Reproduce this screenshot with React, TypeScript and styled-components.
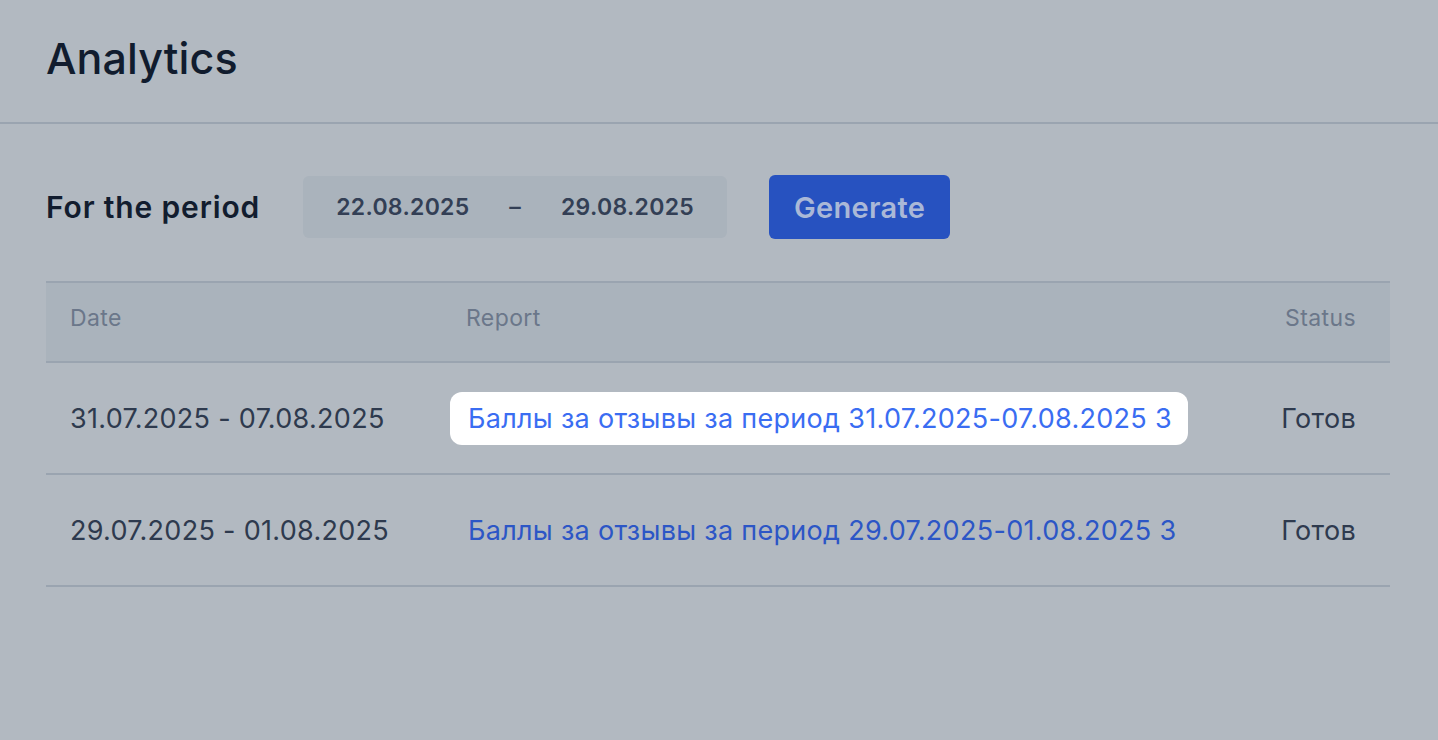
import React from 'react'
import styled, { createGlobalStyle } from 'styled-components'

const GlobalStyle = createGlobalStyle`
  html, body {
    margin: 0;
    padding: 0;
    background: #b2b9c1;
  }
  body {
    font-family: Inter, 'Noto Sans', sans-serif;
    -webkit-font-smoothing: antialiased;
  }
`

const Page = styled.div`
  min-height: 740px;
  background: #b2b9c1;
`

const Header = styled.header`
  height: 124px;
  padding: 0 46px;
  display: flex;
  align-items: center;
  border-bottom: 2px solid #9aa4b0;
  box-sizing: border-box;
`

const Title = styled.h1`
  margin: 0 0 6px;
  font-size: 43px;
  font-weight: 500;
  letter-spacing: 0.1px;
  color: #111c2e;
`

const Content = styled.main`
  padding: 51px 48px 0 46px;
`

const PeriodBar = styled.div`
  display: flex;
  align-items: center;
`

const PeriodLabel = styled.span`
  font-size: 30px;
  font-weight: 600;
  letter-spacing: 0.85px;
  color: #121d2f;
  margin-right: 43px;
`

const RangeBox = styled.div`
  width: 424px;
  height: 62px;
  box-sizing: border-box;
  display: flex;
  align-items: center;
  justify-content: space-between;
  padding: 0 33px;
  border-radius: 6px;
  background: #aab3bc;
  font-size: 23px;
  font-weight: 600;
  letter-spacing: 0.3px;
  color: #333f55;
`

const Dash = styled.span`
  font-weight: 500;
`

const GenerateButton = styled.button`
  margin-left: 42px;
  width: 181px;
  height: 64px;
  border: none;
  border-radius: 6px;
  background: #2752c0;
  color: #aab8d7;
  font-family: inherit;
  font-size: 29px;
  font-weight: 600;
  letter-spacing: 0.3px;
  cursor: pointer;
`

const Table = styled.div`
  margin-top: 42px;
  border-top: 2px solid #9aa4b0;
`

const Row = styled.div<{ $head?: boolean }>`
  display: grid;
  grid-template-columns: 396px 1fr auto;
  align-items: center;
  height: ${(p) => (p.$head ? 69 : 110)}px;
  padding: ${(p) => (p.$head ? '0 34px 9px 24px' : '0 34px 0 24px')};
  background: ${(p) => (p.$head ? '#aab3bc' : 'transparent')};
  border-bottom: 2px solid #9aa4b0;
`

const HeadCell = styled.span`
  font-size: 23px;
  letter-spacing: 0.4px;
  color: #6b778a;
`

const Cell = styled.span`
  font-size: 27px;
  letter-spacing: 0.3px;
  color: #2e3a4e;
`

const ReportLink = styled.a<{ $spotlight?: boolean }>`
  font-size: 27px;
  letter-spacing: 0.3px;
  text-decoration: none;
  cursor: pointer;
  justify-self: start;
  display: inline-flex;
  align-items: center;
  ${(p) =>
    p.$spotlight
      ? `
    color: #3a6df2;
    background: #ffffff;
    height: 53px;
    padding: 0 16px 0 18px;
    margin-left: -16px;
    border-radius: 12px;
  `
      : `
    color: #2c56c6;
    margin-left: 2px;
  `}
`

const reports = [
  { date: '31.07.2025 - 07.08.2025', title: 'Баллы за отзывы за период 31.07.2025-07.08.2025 3', status: 'Готов' },
  { date: '29.07.2025 - 01.08.2025', title: 'Баллы за отзывы за период 29.07.2025-01.08.2025 3', status: 'Готов' },
]

export default function App() {
  return (
    <Page>
      <GlobalStyle />
      <Header>
        <Title>Analytics</Title>
      </Header>
      <Content>
        <PeriodBar>
          <PeriodLabel>For the period</PeriodLabel>
          <RangeBox>
            <span>22.08.2025</span>
            <Dash>–</Dash>
            <span>29.08.2025</span>
          </RangeBox>
          <GenerateButton>Generate</GenerateButton>
        </PeriodBar>

        <Table>
          <Row $head>
            <HeadCell>Date</HeadCell>
            <HeadCell>Report</HeadCell>
            <HeadCell>Status</HeadCell>
          </Row>
          {reports.map((r, i) => (
            <Row key={r.date}>
              <Cell>{r.date}</Cell>
              <ReportLink $spotlight={i === 0}>{r.title}</ReportLink>
              <Cell>{r.status}</Cell>
            </Row>
          ))}
        </Table>
      </Content>
    </Page>
  )
}
